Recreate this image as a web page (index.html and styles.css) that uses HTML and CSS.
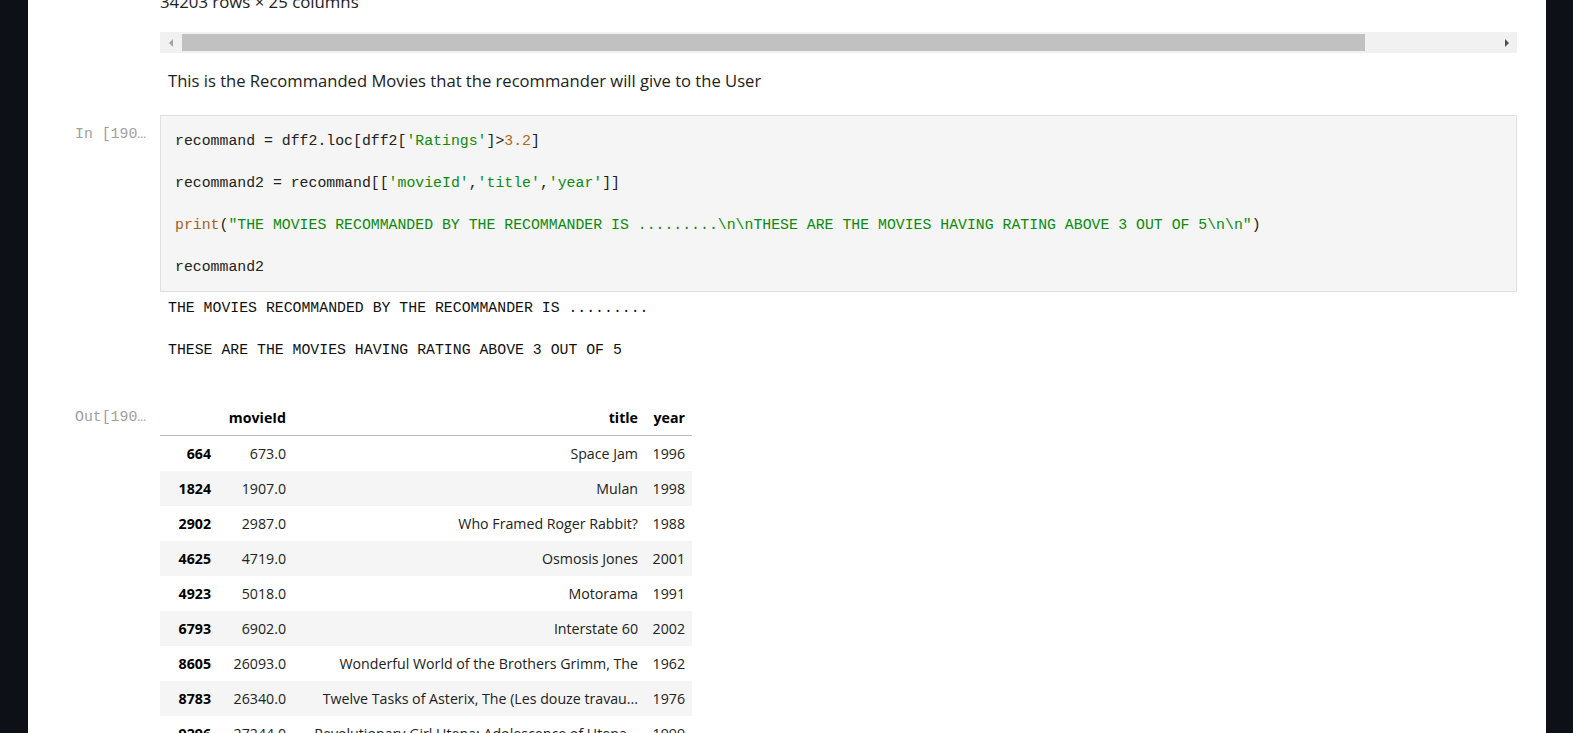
FILE: index.html
```html
<!DOCTYPE html>
<html>
<head>
<meta charset="utf-8">
<link rel="stylesheet" href="styles.css">
</head>
<body>
<div class="page">
  <div class="cell">
    <div class="prompt"></div>
    <div class="area">
      <div class="shape-note">34203 rows × 25 columns</div>
      <div class="hscroll">
        <div class="sbtn"><span class="arrow-left"></span></div>
        <div class="track"><div class="thumb"></div></div>
        <div class="sbtn"><span class="arrow-right"></span></div>
      </div>
    </div>
  </div>

  <div class="cell md-cell">
    <div class="prompt"></div>
    <div class="area">
      <p class="md">This is the Recommanded Movies that the recommander will give to the User</p>
    </div>
  </div>

  <div class="cell code-cell">
    <div class="prompt in-prompt">In [190]:</div>
    <div class="area">
      <pre class="code"><span class="v">recommand</span> <span class="o">=</span> <span class="v">dff2</span>.<span class="v">loc</span>[<span class="v">dff2</span>[<span class="s">'Ratings'</span>]<span class="o">&gt;</span><span class="n">3.2</span>]

<span class="v">recommand2</span> <span class="o">=</span> <span class="v">recommand</span>[[<span class="s">'movieId'</span>,<span class="s">'title'</span>,<span class="s">'year'</span>]]

<span class="b">print</span>(<span class="s">"THE MOVIES RECOMMANDED BY THE RECOMMANDER IS .........\n\nTHESE ARE THE MOVIES HAVING RATING ABOVE 3 OUT OF 5\n\n"</span>)

<span class="v">recommand2</span></pre>
    </div>
  </div>

  <div class="cell">
    <div class="prompt"></div>
    <div class="area">
      <div class="stream">
        <div class="sline">THE MOVIES RECOMMANDED BY THE RECOMMANDER IS .........</div>
        <div class="sline">&nbsp;</div>
        <div class="sline">THESE ARE THE MOVIES HAVING RATING ABOVE 3 OUT OF 5</div>
        <div class="sline">&nbsp;</div>
      </div>
    </div>
  </div>

  <div class="cell">
    <div class="prompt out-prompt">Out[190]:</div>
    <div class="area">
      <table class="df">
        <colgroup>
          <col class="c-idx"><col class="c-id"><col class="c-title"><col class="c-year">
        </colgroup>
        <thead>
          <tr><th></th><th>movieId</th><th>title</th><th>year</th></tr>
        </thead>
        <tbody>
          <tr><th>664</th><td>673.0</td><td>Space Jam</td><td>1996</td></tr>
          <tr><th>1824</th><td>1907.0</td><td>Mulan</td><td>1998</td></tr>
          <tr><th>2902</th><td>2987.0</td><td>Who Framed Roger Rabbit?</td><td>1988</td></tr>
          <tr><th>4625</th><td>4719.0</td><td>Osmosis Jones</td><td>2001</td></tr>
          <tr><th>4923</th><td>5018.0</td><td>Motorama</td><td>1991</td></tr>
          <tr><th>6793</th><td>6902.0</td><td>Interstate 60</td><td>2002</td></tr>
          <tr><th>8605</th><td>26093.0</td><td>Wonderful World of the Brothers Grimm, The</td><td>1962</td></tr>
          <tr><th>8783</th><td>26340.0</td><td>Twelve Tasks of Asterix, The (Les douze travau...</td><td>1976</td></tr>
          <tr><th>9296</th><td>27244.0</td><td>Revolutionary Girl Utena: Adolescence of Utena...</td><td>1999</td></tr>
        </tbody>
      </table>
    </div>
  </div>
</div>
</body>
</html>
```
FILE: styles.css
```css
html, body {
  margin: 0;
  padding: 0;
  background: #0d1117;
  overflow: hidden;
}

.page {
  margin: 0 27px 0 28px;
  background: #ffffff;
  min-height: 733px;
  padding-right: 29px;
  font-family: "Open Sans", "Noto Sans", sans-serif;
  color: #212121;
}

.cell {
  display: flex;
}

.prompt {
  flex: none;
  width: 132px;
  box-sizing: border-box;
  padding: 0 13px 0 47px;
  font-family: "Liberation Mono", monospace;
  font-size: 14.83px;
  line-height: 21px;
  color: #a0a0a0;
  white-space: nowrap;
  overflow: hidden;
  text-overflow: ellipsis;
}

.area {
  flex: 1;
  min-width: 0;
}

.shape-note {
  margin-top: -9px;
  font-size: 16.8px;
  line-height: 22px;
  color: #212121;
}

.hscroll {
  margin-top: 19px;
  height: 21px;
  display: flex;
  background: #f1f1f1;
}

.sbtn {
  flex: none;
  width: 21px;
  display: flex;
  align-items: center;
  justify-content: center;
}

.arrow-left {
  width: 0;
  height: 0;
  border-top: 4px solid transparent;
  border-bottom: 4px solid transparent;
  border-right: 4px solid #a3a3a3;
}

.arrow-right {
  width: 0;
  height: 0;
  border-top: 4px solid transparent;
  border-bottom: 4px solid transparent;
  border-left: 4px solid #505050;
}

.track {
  flex: 1;
  padding: 2px 0 2px 1px;
  display: flex;
}

.thumb {
  width: 1183px;
  background: #c1c1c1;
}

.md-cell {
  margin-top: 17px;
}

.md {
  margin: 0;
  padding-left: 8px;
  font-size: 16.6px;
  line-height: 22px;
  color: #212121;
}

.code-cell {
  margin-top: 23px;
}

.in-prompt {
  padding-top: 9px;
}

.code {
  margin: 0;
  padding: 15px 14px 13px;
  background: #f5f5f5;
  border: 1px solid #e0e0e0;
  font-family: "Liberation Mono", monospace;
  font-size: 14.83px;
  line-height: 21px;
  color: #212121;
  white-space: pre;
  overflow: hidden;
}

.code .v { color: #212121; }
.code .o { color: #212121; }
.code .s { color: #0b8a0b; }
.code .n { color: #b0671c; }
.code .b { color: #a55e25; }

.stream {
  padding: 6px 0 18px 8px;
  font-family: "Liberation Mono", monospace;
  font-size: 14.83px;
  line-height: 21px;
  color: #111111;
}

.sline {
  white-space: pre;
}

.out-prompt {
  padding-top: 7px;
}

.df {
  border-collapse: collapse;
  table-layout: fixed;
  width: 532px;
  font-size: 14.2px;
  line-height: 21px;
  color: #212121;
}

.c-idx { width: 58px; }
.c-id { width: 75px; }
.c-title { width: 352px; }
.c-year { width: 47px; }

.df th, .df td {
  padding: 7px 7px;
  text-align: right;
  white-space: nowrap;
  overflow: hidden;
}

.df th {
  font-weight: bold;
  color: #000000;
}

.df thead tr {
  border-bottom: 1px solid #bdbdbd;
}

.df tbody tr:nth-child(even) {
  background: #f5f5f5;
}
```
